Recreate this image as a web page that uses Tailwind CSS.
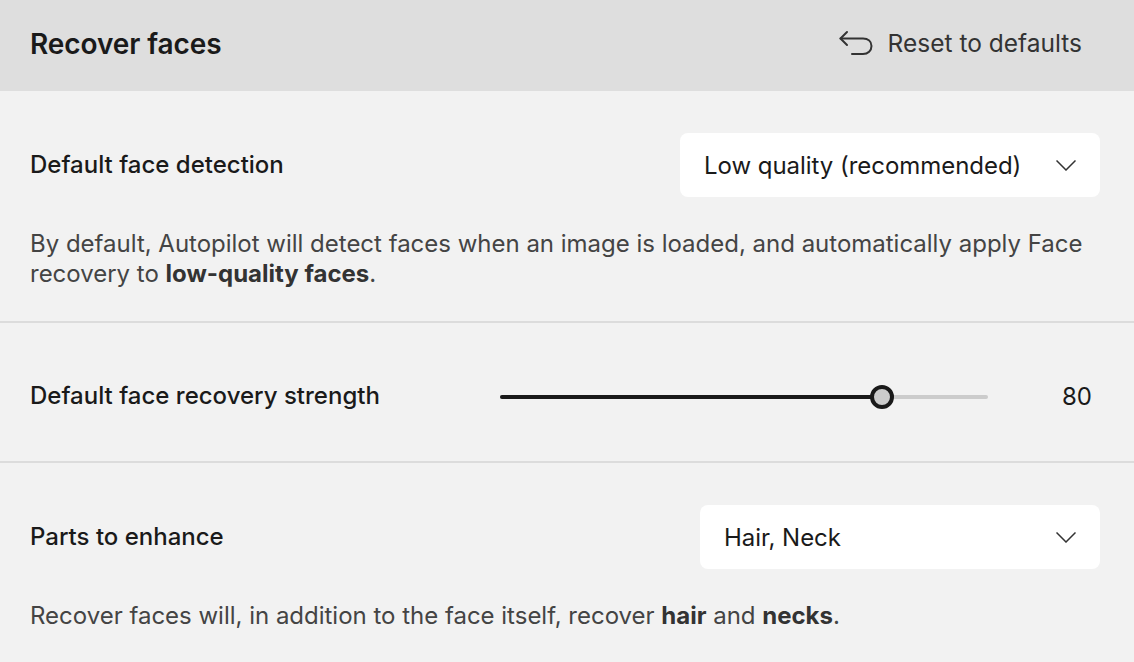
<!DOCTYPE html>
<html lang="en">
  <head>
    <meta charset="UTF-8" />
    <title>Recover faces</title>
    <script src="https://cdn.jsdelivr.net/npm/@tailwindcss/browser@4"></script>
  </head>
  <body class="bg-[#f2f2f2] font-['Inter',sans-serif] text-[#1a1a1a] h-[662px] w-[1134px] overflow-hidden">
    <!-- Header -->
    <div class="h-[91px] bg-[#dedede] flex items-center justify-between pl-[30px] pr-[52px]">
      <h1 class="text-[28px] font-semibold leading-none mb-[3px] tracking-[-0.08px]">Recover faces</h1>
      <button class="flex items-center gap-[15px] text-[24.5px] text-[#333] mb-[5px]">
        <svg width="34" height="26" viewBox="0 0 34 26" fill="none" stroke="#333" stroke-width="2" stroke-linecap="round" stroke-linejoin="round">
          <path d="M8 2 L1.500 8.500 L8 15" />
          <path d="M1.500 8.500 H24 C29 8.500 32.500 11.500 32.500 16 C32.500 20.500 29 24 24 24 H13" />
        </svg>
        <span>Reset to defaults</span>
      </button>
    </div>

    <!-- Face detection -->
    <div class="h-[232px] border-b-2 border-[#dcdcdc] pl-[30px] pr-[34px] pt-[42px]">
      <div class="flex items-center justify-between">
        <span class="text-[24px] font-medium">Default face detection</span>
        <div class="w-[420px] h-[64px] bg-white rounded-lg flex items-center justify-between pl-[24px] pr-[24px] pt-[2px] text-[24px]">
          <span class="tracking-[-0.04px]">Low quality (recommended)</span>
          <svg class="mb-[2px]" width="20" height="11" viewBox="0 0 20 11" fill="none" stroke="#333" stroke-width="1.500"><path d="M0.500 0.500 L10 10 L19.500 0.500" /></svg>
        </div>
      </div>
      <p class="mt-[32px] text-[24px] leading-[30px] text-[#444] pr-[16px] tracking-[-0.01px]">By default, Autopilot will detect faces when an image is loaded, and automatically apply Face recovery to <b class="font-bold text-[#333]">low-quality faces</b>.</p>
    </div>

    <!-- Strength -->
    <div class="h-[140px] border-b-2 border-[#dcdcdc] pl-[30px] pr-[42px] pt-[10px] flex items-center">
      <span class="text-[24px] font-medium w-[470px] mb-[2px]">Default face recovery strength</span>
      <div class="relative w-[488px] h-[4px] bg-[#ccc] rounded-full">
        <div class="h-full w-[382px] bg-[#1a1a1a] rounded-full"></div>
        <div class="absolute left-[370px] top-[-10px] w-[24px] h-[24px] rounded-full bg-[#ccc] border-[4px] border-[#1a1a1a]"></div>
      </div>
      <span class="ml-auto text-[24px]">80</span>
    </div>

    <!-- Parts -->
    <div class="pl-[30px] pr-[34px] pt-[42px]">
      <div class="flex items-center justify-between">
        <span class="text-[24px] font-medium">Parts to enhance</span>
        <div class="w-[400px] h-[64px] bg-white rounded-lg flex items-center justify-between px-[24px] pt-[2px] text-[24px]">
          <span class="tracking-[-0.04px]">Hair, Neck</span>
          <svg class="mb-[2px]" width="20" height="11" viewBox="0 0 20 11" fill="none" stroke="#333" stroke-width="1.500"><path d="M0.500 0.500 L10 10 L19.500 0.500" /></svg>
        </div>
      </div>
      <p class="mt-[32px] text-[24px] leading-[30px] text-[#444] tracking-[-0.01px]">Recover faces will, in addition to the face itself, recover <b class="font-bold text-[#333]">hair</b> and <b class="font-bold text-[#333]">necks</b>.</p>
    </div>
  </body>
</html>
